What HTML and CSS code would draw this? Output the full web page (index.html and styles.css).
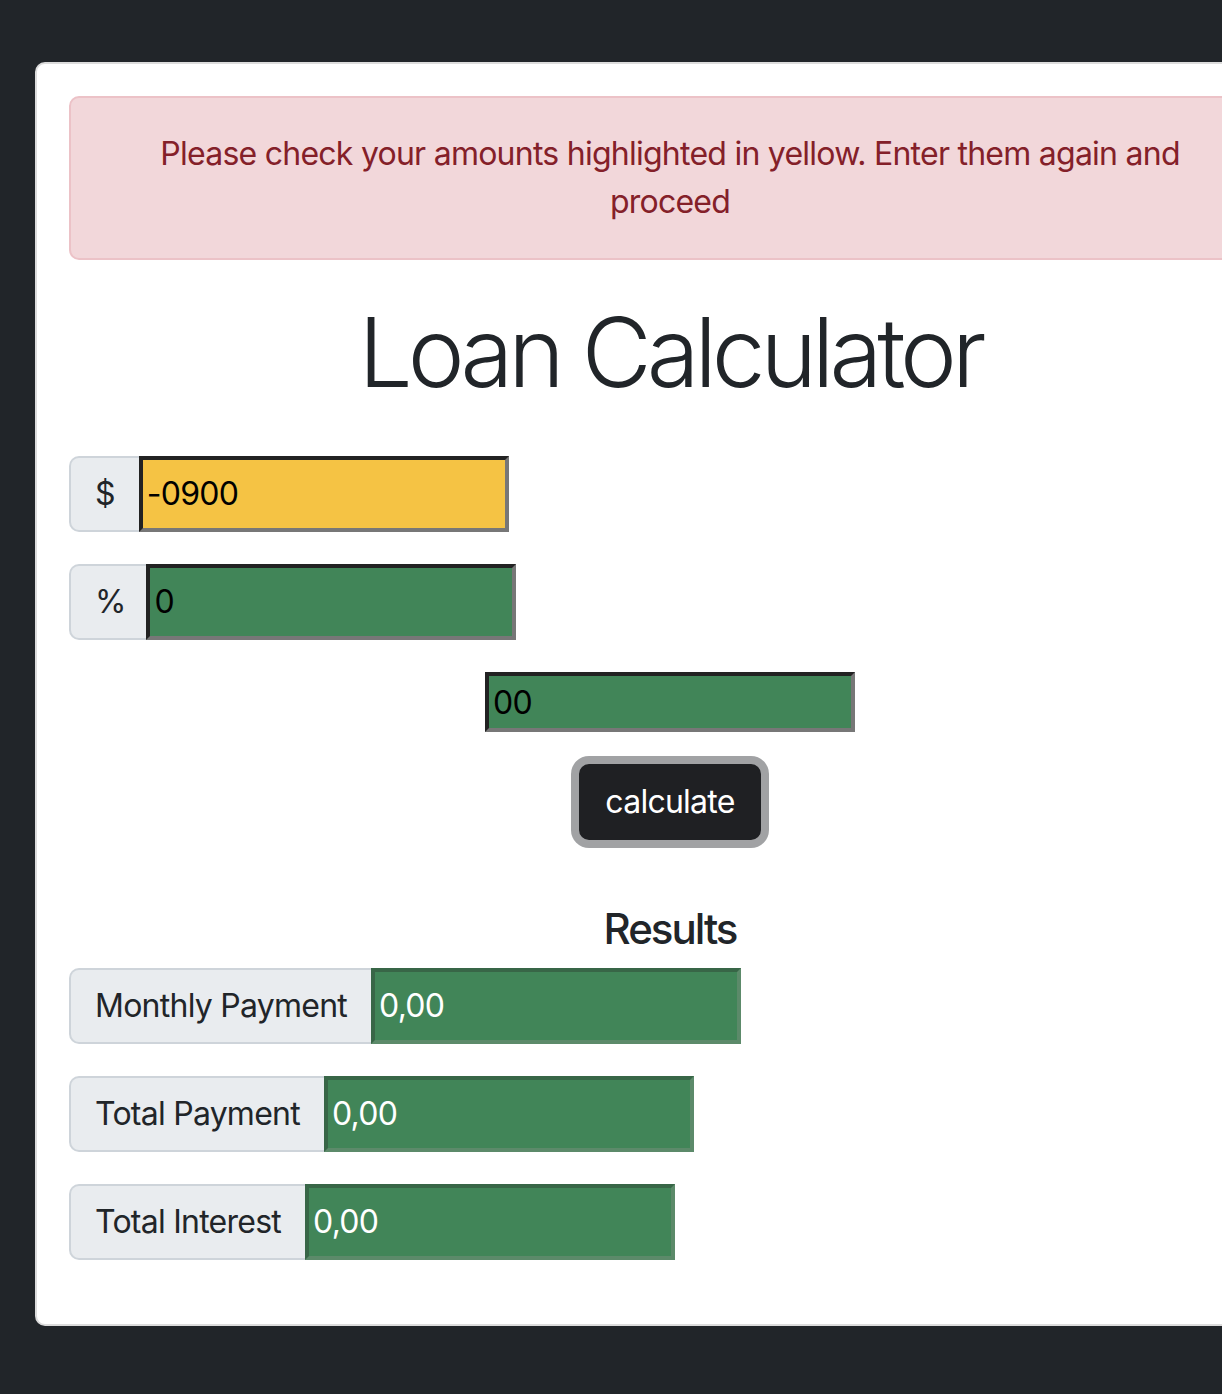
FILE: index.html
```html
<!DOCTYPE html>
<html lang="en">
<head>
<meta charset="utf-8">
<title>Loan Calculator</title>
<link rel="stylesheet" href="styles.css">
</head>
<body>
  <main class="card">
    <div class="alert">Please check your amounts highlighted in yellow. Enter them again and proceed</div>
    <h1 class="title">Loan Calculator</h1>
    <form class="form">
      <div class="group">
        <span class="group-text">$</span>
        <input class="field field-warn" type="text" value="-0900">
      </div>
      <div class="group">
        <span class="group-text group-text-pct">%</span>
        <input class="field field-ok" type="text" value="0">
      </div>
      <div class="center-row">
        <input class="field field-ok field-solo" type="text" value="00">
      </div>
      <div class="center-row">
        <button type="button" class="btn">calculate</button>
      </div>
    </form>
    <h4 class="results-title">Results</h4>
    <div class="group">
      <span class="group-text">Monthly Payment</span>
      <input class="field field-result" type="text" value="0,00">
    </div>
    <div class="group">
      <span class="group-text">Total Payment</span>
      <input class="field field-result" type="text" value="0,00">
    </div>
    <div class="group">
      <span class="group-text">Total Interest</span>
      <input class="field field-result" type="text" value="0,00">
    </div>
  </main>
</body>
</html>
```
FILE: styles.css
```css
html {
  overflow: hidden;
}
body {
  margin: 0;
  padding: 62px 0 70px 35px;
  background: #212529;
  font-family: "Inter", "Liberation Sans", sans-serif;
  color: #212529;
  font-size: 32px;
  line-height: 48px;
  letter-spacing: -0.75px;
}
.card {
  box-sizing: border-box;
  width: 1270px;
  background: #fff;
  border: 2px solid #dcdcdc;
  border-radius: 10px;
  padding: 32px;
}
.alert {
  background: #f2d7da;
  border: 2px solid #ecc2c7;
  border-radius: 10px;
  color: #842029;
  text-align: center;
  padding: 32px 32px;
  margin-bottom: 32px;
}
.title {
  margin: 0 0 44px;
  font-size: 96px;
  font-weight: 300;
  line-height: 120px;
  text-align: center;
  letter-spacing: -5px;
}
.form {
  margin: 0;
}
.group {
  display: flex;
  align-items: stretch;
  height: 76px;
  margin-bottom: 32px;
}
.group-text {
  display: flex;
  align-items: center;
  padding: 0 24px;
  background: #e9ecef;
  border: 2px solid #ced4da;
  border-right: none;
  border-radius: 10px 0 0 10px;
  color: #212529;
}
.group-text-pct {
  padding: 0 22px 0 24px;
  letter-spacing: -2px;
}
.field {
  box-sizing: border-box;
  width: 370px;
  margin: 0;
  padding: 2px 4px;
  font-family: "Inter", "Liberation Sans", sans-serif;
  font-size: 32px;
  line-height: 48px;
  letter-spacing: -0.75px;
  border-style: solid;
  border-width: 4px;
  border-radius: 0;
  outline: none;
  color: #000;
}
.field-warn {
  background: #f5c344;
  border-color: #222 #777 #777 #222;
}
.field-ok {
  background: #418558;
  border-color: #222 #777 #777 #222;
}
.field-result {
  background: #418558;
  border-color: #386647 #5c8a6a #5c8a6a #386647;
  color: #fff;
}
.center-row {
  display: flex;
  justify-content: center;
}
.field-solo {
  height: 60px;
  margin-bottom: 32px;
}
.btn {
  font-family: "Inter", "Liberation Sans", sans-serif;
  font-size: 32px;
  line-height: 48px;
  letter-spacing: -0.75px;
  color: #fff;
  background: #1f2023;
  border: 2px solid #1f2023;
  border-radius: 10px;
  padding: 12px 24px;
  box-shadow: 0 0 0 8px #a1a2a4;
  cursor: pointer;
}
.results-title {
  margin: 62px 0 13px;
  font-size: 42px;
  font-weight: 500;
  line-height: 53px;
  letter-spacing: -2px;
  text-align: center;
}
```
